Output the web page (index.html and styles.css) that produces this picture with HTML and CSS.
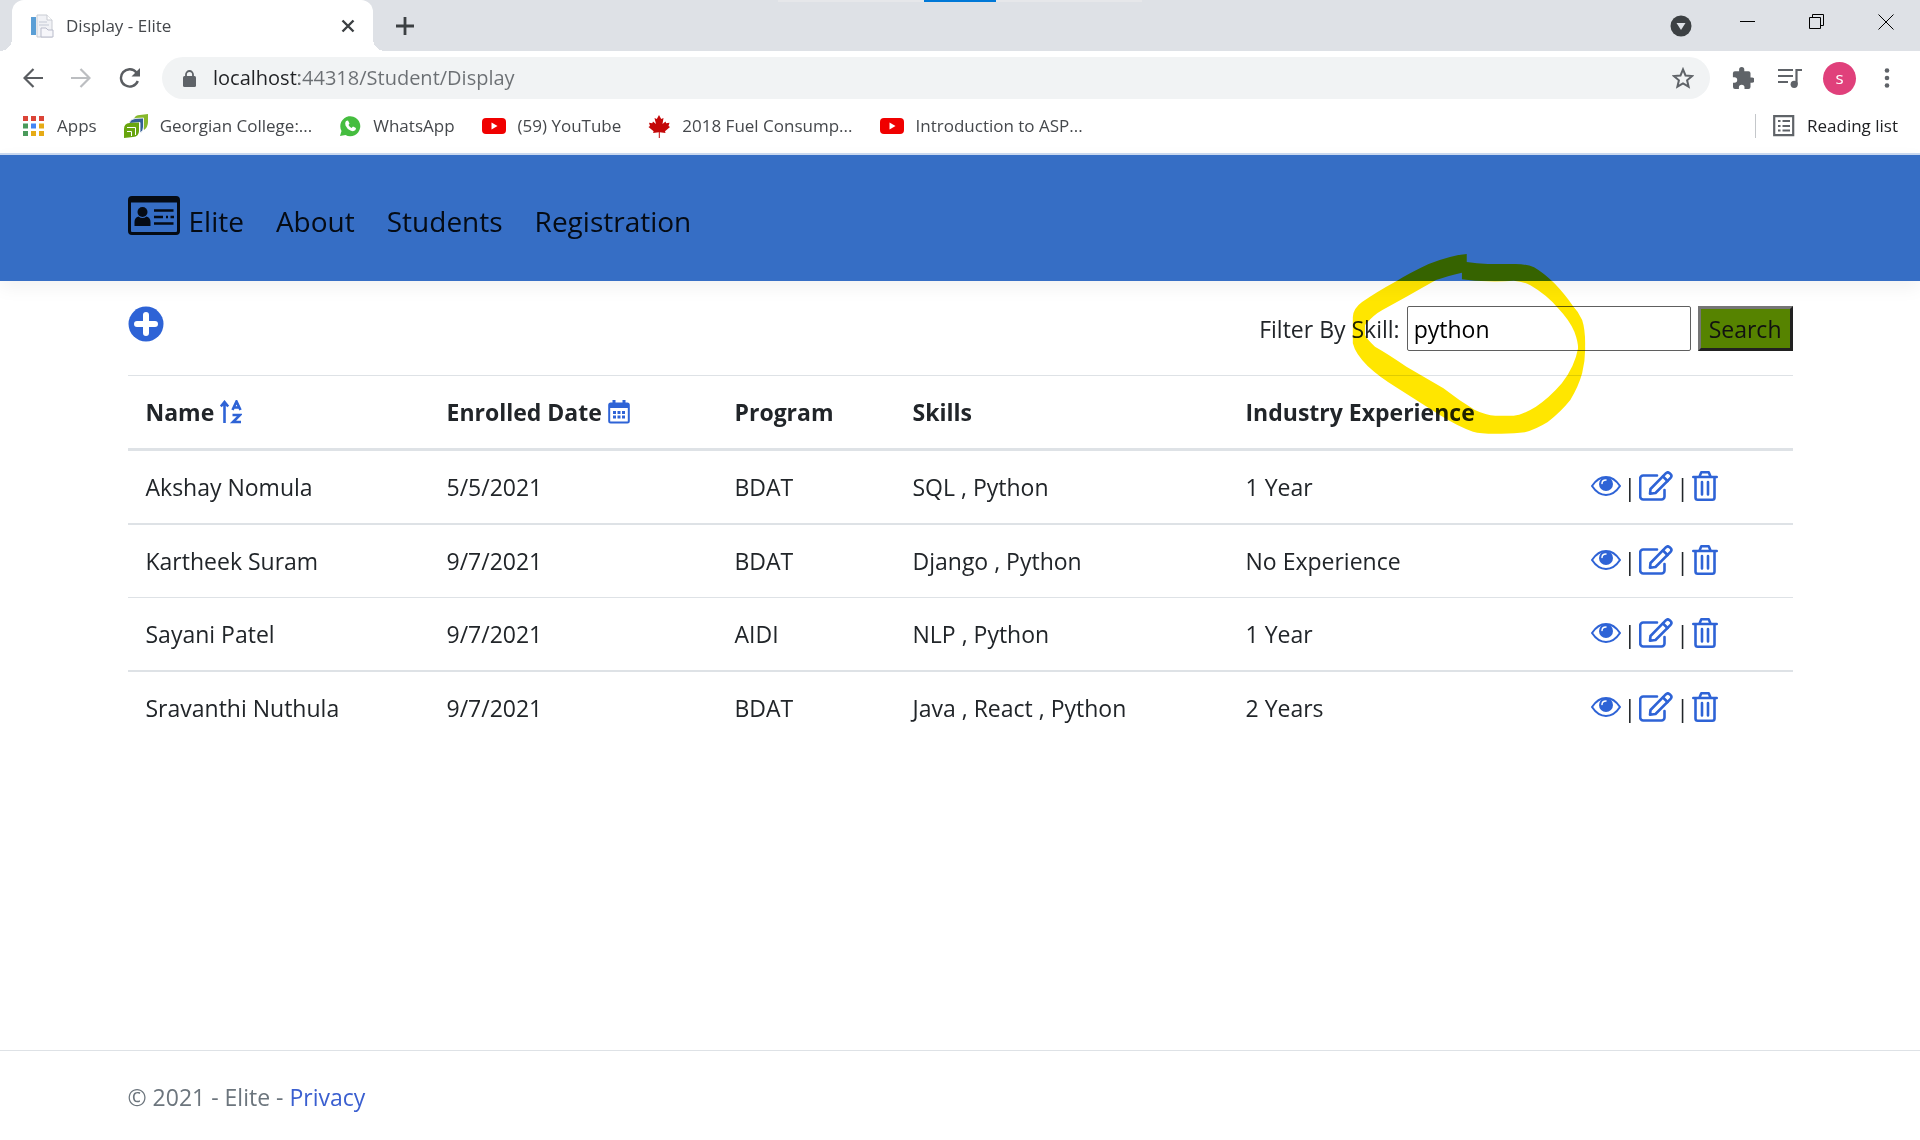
FILE: index.html
```html
<!DOCTYPE html>
<html lang="en">
<head>
<meta charset="utf-8">
<meta name="viewport" content="width=device-width, initial-scale=1">
<title>Display - Elite</title>
<link rel="stylesheet" href="styles.css">
</head>
<body>
<svg class="sprite" width="0" height="0" aria-hidden="true">
  <symbol id="eye" viewBox="0 0 30 20">
    <path d="M1 10C5 4 10 1 15 1s10 3 14 9c-4 6-9 9-14 9S5 16 1 10z" fill="#fff" stroke="#2e63d6" stroke-width="2"/>
    <circle cx="15" cy="8" r="7" fill="#2e63d6"/>
    <path d="M11 7.500C11 5 12.500 4 15 4" fill="none" stroke="#fff" stroke-width="1.500" stroke-linecap="round"/>
  </symbol>
  <symbol id="edit" viewBox="0 0 34 30">
    <g fill="none" stroke="#2e63d6" stroke-width="2.600" stroke-linejoin="round" stroke-linecap="round">
      <path d="M18 4.500H4.200a3 3 0 0 0-3 3V25.500a3 3 0 0 0 3 3H22.500a3 3 0 0 0 3-3V19"/>
      <path d="M11.500 18L27 2.200a2.600 2.600 0 0 1 3.600 0l1 1a2.600 2.600 0 0 1 0 3.600L16.500 22l-5.500.8z"/>
      <path d="M24 5.500l4.500 4.500"/>
    </g>
  </symbol>
  <symbol id="trash" viewBox="0 0 26 30">
    <g fill="none" stroke="#2e63d6" stroke-width="2.600" stroke-linejoin="round" stroke-linecap="round">
      <path d="M1.300 6H24.700M3.500 6V26.500a2.200 2.200 0 0 0 2.200 2.200H20.300a2.200 2.200 0 0 0 2.200-2.200V6M7.500 5.500L9.300 1.300H16.700L18.500 5.500M10 11V23.500M16 11V23.500"/>
    </g>
  </symbol>
  <symbol id="youtube" viewBox="0 0 24 16">
    <rect width="24" height="16" rx="4" fill="#f00000"/><path d="M9.500 4.500v7l6-3.500z" fill="#fff"/>
  </symbol>
</svg>

<header class="browser">
  <div class="snap-bar"></div>
  <div class="tab-strip">
    <div class="tab">
      <svg width="24" height="24" viewBox="0 0 24 24" aria-hidden="true"><path d="M7 1h10l5 5v17H7z" fill="#f1f2f6" stroke="#c9ccd3"/><path d="M17 1v5h5" fill="#fff" stroke="#c9ccd3"/><rect x="1" y="3" width="5" height="18" fill="#5b9fd6"/><path d="M9 8h8M9 11h10" stroke="#c3c8d4"/><path d="M11 14h5l2 2h5v7H11z" fill="#f6f6fa" stroke="#b9bccb"/></svg>
      <span class="tab-title">Display - Elite</span>
      <button class="icon-button" aria-label="Close tab"><svg width="14" height="14" viewBox="0 0 14 14"><path d="M1.500 1.500l11 11M12.500 1.500l-11 11" stroke="#3c4043" stroke-width="2.400"/></svg></button>
    </div>
    <button class="icon-button new-tab" aria-label="New tab"><svg width="18" height="18" viewBox="0 0 18 18"><path d="M9 0v18M0 9h18" stroke="#3c4043" stroke-width="2.800"/></svg></button>
    <div class="window-buttons">
      <button class="icon-button tab-search" aria-label="Search tabs"><svg width="22" height="22" viewBox="0 0 22 22"><circle cx="11" cy="11" r="10.500" fill="#3c4043"/><path d="M6.500 8h9L11 15z" fill="#dee1e6"/></svg></button>
      <button class="icon-button" aria-label="Minimize"><svg width="16" height="16" viewBox="0 0 16 16"><path d="M0 7.500h15" stroke="#000"/></svg></button>
      <button class="icon-button" aria-label="Restore"><svg width="16" height="16" viewBox="0 0 16 16"><path d="M.5 3.500h11v11H.5zM3.500 3.500v-3h11v11h-3" fill="none" stroke="#000"/></svg></button>
      <button class="icon-button" aria-label="Close"><svg width="16" height="16" viewBox="0 0 16 16"><path d="M.5.5l15 15M15.500.5l-15 15" stroke="#000"/></svg></button>
    </div>
  </div>

  <div class="toolbar">
    <div class="history">
      <button class="icon-button" aria-label="Back"><svg width="20" height="20" viewBox="0 0 20 20"><path d="M20 10H2M10.500 1L1.500 10l9 9" fill="none" stroke="#5a5d61" stroke-width="2.200"/></svg></button>
      <button class="icon-button" aria-label="Forward"><svg width="20" height="20" viewBox="0 0 20 20"><path d="M0 10h18M9.500 1l9 9-9 9" fill="none" stroke="#bcbec1" stroke-width="2.200"/></svg></button>
      <button class="icon-button" aria-label="Reload"><svg width="21" height="20" viewBox="0 0 21 20"><path d="M17.500 4.500A8.700 8.700 0 1 0 18.800 13" fill="none" stroke="#5a5d61" stroke-width="2.400"/><path d="M21 0v8.500h-8.500z" fill="#5a5d61"/></svg></button>
    </div>
    <div class="omnibox">
      <svg width="13" height="17" viewBox="0 0 13 17" aria-hidden="true"><rect y="6" width="13" height="11" rx="1.500" fill="#5f6368"/><path d="M3 7V4.500a3.500 3.500 0 0 1 7 0V7" fill="none" stroke="#5f6368" stroke-width="1.800"/></svg>
      <input class="address" type="text" aria-label="Address" value="localhost:44318/Student/Display">
      <button class="icon-button" aria-label="Bookmark this page"><svg width="22" height="22" viewBox="0 0 22 22"><path d="M11 2.400l2.500 6.100 6.600.5-5 4.300 1.500 6.400L11 16.300l-5.600 3.400 1.500-6.400-5-4.300 6.600-.5z" fill="none" stroke="#5f6368" stroke-width="2"/></svg></button>
    </div>
    <div class="extensions">
      <button class="icon-button" aria-label="Extensions"><svg width="22" height="22" viewBox="0 0 22 22"><path d="M20 10.500h-1.500V6.300a2 2 0 0 0-2-2h-4.200V2.700a2.600 2.600 0 0 0-5.200 0v1.600H2.900a2 2 0 0 0-2 2v3.900h1.500a2.800 2.800 0 0 1 0 5.600H1V20a2 2 0 0 0 2 2h3.900v-1.500a2.800 2.800 0 0 1 5.600 0V22h4a2 2 0 0 0 2-2v-4.300H20a2.600 2.600 0 0 0 0-5.200z" fill="#5f6368"/></svg></button>
      <button class="icon-button" aria-label="Media"><svg width="24" height="20" viewBox="0 0 24 20"><path d="M0 2h15M0 8h15M0 14h10M18.500 16V2H24" fill="none" stroke="#5f6368" stroke-width="2.200"/><circle cx="16.200" cy="16.300" r="3.600" fill="#5f6368"/></svg></button>
      <button class="avatar" aria-label="Profile">s</button>
      <button class="icon-button" aria-label="Menu"><svg width="6" height="20" viewBox="0 0 6 20"><g fill="#5f6368"><circle cx="3" cy="2.500" r="2.300"/><circle cx="3" cy="10" r="2.300"/><circle cx="3" cy="17.500" r="2.300"/></g></svg></button>
    </div>
  </div>

  <nav class="bookmarks" aria-label="Bookmarks">
    <a class="bookmark" href="#"><svg width="22" height="20" viewBox="0 0 22 20"><g fill="#db4437"><path d="M0 0h5v5H0zM8 0h5v5H8zM16 0h5v5h-5z"/></g><path d="M0 7.500h5v5H0zM0 15h5v5H0z" fill="#4a9a5b"/><path d="M8 7.500h5v5H8z" fill="#4285f4"/><path d="M16 7.500h5v5h-5zM8 15h5v5H8zM16 15h5v5h-5z" fill="#e6ab16"/></svg>Apps</a>
    <a class="bookmark" href="#"><svg width="24" height="24" viewBox="0 0 24 24"><path d="M10 5Q11 1 16 1L24 0v8q0 5-4 8V4.500z" fill="#86b82b"/><path d="M5 9.500q1-4.500 6-5L19.500 4v9q0 4-3.500 6V8.500z" fill="#345f95" stroke="#fff" stroke-width=".8"/><path d="M0 15q0-5.500 5.500-6L15 8.500V17q0 5.500-6 6L0 24z" fill="#68a50f"/><path d="M3 13.500h8.500V21M3 17.500h4.500V22" fill="none" stroke="#fff"/></svg>Georgian College:...</a>
    <a class="bookmark" href="#"><svg width="22" height="22" viewBox="0 0 22 22"><path d="M1 21l1.500-5A10 10 0 1 1 6.500 20z" fill="#45bd3f"/><path d="M7 6l2-.5L10.500 8.500 9.500 10q1 2 3 3l1.500-1.500 3 1.500-.5 2q-2 2-5 .5Q8 14 6.500 10.500 5.500 8 7 6z" fill="#fff"/></svg>WhatsApp</a>
    <a class="bookmark" href="#"><svg width="24" height="16"><use href="#youtube"/></svg>(59) YouTube</a>
    <a class="bookmark" href="#"><svg width="22" height="23" viewBox="0 0 22 23"><path d="M11 0l2.200 4 2.300-1-1 6 3-2.500.7 1.800 3.300-.5-1 3.200 1.500 1-5 4.200.5 1.800-5.700-.8V23h-1v-5.800l-5.700.8.5-1.800L.5 12l1.500-1L1 7.800l3.300.5L5 6.500 8 9 6.500 3l2.300 1z" fill="#c40808"/></svg>2018 Fuel Consump...</a>
    <a class="bookmark" href="#"><svg width="24" height="16"><use href="#youtube"/></svg>Introduction to ASP...</a>
    <a class="bookmark reading-list" href="#"><svg width="22" height="22" viewBox="0 0 22 22"><path d="M1.200 1.200h19v19h-19z" fill="none" stroke="#5f6368" stroke-width="2.200"/><path d="M5 6h2.500M5 11h2.500M5 15.500h2.500M9.500 6H17M9.500 11H17M9.500 15.500H17" stroke="#5f6368" stroke-width="2"/></svg>Reading list</a>
  </nav>
</header>

<nav class="site-nav">
  <div class="container nav-items">
    <a class="brand" href="#"><svg width="52" height="40" viewBox="0 0 52 40" aria-hidden="true"><rect x="1.500" y="1.500" width="49" height="36" rx="2.500" fill="none" stroke="#050b14" stroke-width="3"/><path d="M1 1h50v5.500H1z" fill="#050b14"/><circle cx="14.500" cy="16" r="5" fill="#050b14"/><path d="M6.500 30v-4q0-4.500 4-5.500q4 3 8 0q4 1 4 5.500v4z" fill="#050b14"/><path d="M26 14.500h19.500M26 21h9M38 21h2M42.500 21H46M26 27.500h19.500" stroke="#050b14" stroke-width="2.600"/></svg>Elite</a>
    <a href="#">About</a>
    <a href="#">Students</a>
    <a href="#">Registration</a>
  </div>
</nav>

<main class="container">
  <div class="actions-bar">
    <a class="add" href="#" aria-label="Add student"><svg width="36" height="36" viewBox="0 0 36 36"><circle cx="18" cy="18" r="17.500" fill="#2e63d6"/><path d="M18 9v18M9 18h18" stroke="#fff" stroke-width="6" stroke-linecap="round"/></svg></a>
    <form class="filter" onsubmit="return false">
      <label for="skill">Filter By Skill:</label>
      <input id="skill" type="text" value="python">
      <button class="search">Search</button>
      <svg class="highlighter" viewBox="0 0 1568 600" preserveAspectRatio="none" aria-hidden="true">
        <path fill="#ffe600" d="M613 42Q570 46 510 72Q460 98 420 125Q370 155 330 186Q305 206 305 232V310Q312 342 345 378Q378 412 420 440L540 525Q590 560 630 575Q650 581 690 581Q740 582 770 577Q800 568 832 546Q868 515 893 480Q915 440 925 400Q934 360 933 320Q934 270 925 240Q915 215 900 198Q880 165 850 130Q820 98 795 82Q775 72 745 72H670Q640 70 613 66ZM600 98V118Q635 124 670 124Q710 125 740 122Q765 124 785 136Q830 165 860 205Q890 240 904 275Q914 305 914 325Q905 380 870 430Q835 475 800 500Q760 527 740 527H690Q665 526 635 510Q590 480 550 445L450 380Q400 342 365 320Q345 300 338 285V255Q360 225 385 210L450 170Q490 145 530 120Q560 108 600 98Z"/>
      </svg>
    </form>
  </div>

  <table class="students">
    <colgroup><col class="c-name"><col class="c-date"><col class="c-program"><col class="c-skills"><col class="c-exp"><col></colgroup>
    <thead>
      <tr>
        <th>Name <a href="#" aria-label="Sort by name"><svg width="22" height="24" viewBox="0 0 22 24"><path d="M4.500 23V4M.8 6.500L4.500 2l3.700 4.500" fill="none" stroke="#2e63d6" stroke-width="2.600"/><path d="M12.500 10L16.500 1.500 20.500 10M13.500 7.500h6M12.500 15h7.500l-7 7H21" fill="none" stroke="#2e63d6" stroke-width="2.600"/></svg></a></th>
        <th>Enrolled Date <a href="#" aria-label="Sort by date"><svg width="22" height="24" viewBox="0 0 22 24"><rect x="1.200" y="3.500" width="19.600" height="19" rx="1.500" fill="none" stroke="#2e63d6" stroke-width="2"/><path d="M1 3h20v5H1zM4.500 0h3v4h-3zM14.500 0h3v4h-3z" fill="#2e63d6"/><path d="M5 12.500h12M5 17h12" stroke="#2e63d6" stroke-width="3" stroke-dasharray="3 1.500"/></svg></a></th>
        <th>Program</th><th>Skills</th><th>Industry Experience</th><th></th>
      </tr>
    </thead>
    <tbody>
      <tr><td>Akshay Nomula</td><td>5/5/2021</td><td>BDAT</td><td>SQL , Python</td><td>1 Year</td>
        <td><div class="row-actions"><a href="#" aria-label="View"><svg width="30" height="20"><use href="#eye"/></svg></a><span>|</span><a href="#" aria-label="Edit"><svg width="34" height="30"><use href="#edit"/></svg></a><span>|</span><a href="#" aria-label="Delete"><svg width="26" height="30"><use href="#trash"/></svg></a></div></td></tr>
      <tr><td>Kartheek Suram</td><td>9/7/2021</td><td>BDAT</td><td>Django , Python</td><td>No Experience</td>
        <td><div class="row-actions"><a href="#" aria-label="View"><svg width="30" height="20"><use href="#eye"/></svg></a><span>|</span><a href="#" aria-label="Edit"><svg width="34" height="30"><use href="#edit"/></svg></a><span>|</span><a href="#" aria-label="Delete"><svg width="26" height="30"><use href="#trash"/></svg></a></div></td></tr>
      <tr><td>Sayani Patel</td><td>9/7/2021</td><td>AIDI</td><td>NLP , Python</td><td>1 Year</td>
        <td><div class="row-actions"><a href="#" aria-label="View"><svg width="30" height="20"><use href="#eye"/></svg></a><span>|</span><a href="#" aria-label="Edit"><svg width="34" height="30"><use href="#edit"/></svg></a><span>|</span><a href="#" aria-label="Delete"><svg width="26" height="30"><use href="#trash"/></svg></a></div></td></tr>
      <tr><td>Sravanthi Nuthula</td><td>9/7/2021</td><td>BDAT</td><td>Java , React , Python</td><td>2 Years</td>
        <td><div class="row-actions"><a href="#" aria-label="View"><svg width="30" height="20"><use href="#eye"/></svg></a><span>|</span><a href="#" aria-label="Edit"><svg width="34" height="30"><use href="#edit"/></svg></a><span>|</span><a href="#" aria-label="Delete"><svg width="26" height="30"><use href="#trash"/></svg></a></div></td></tr>
    </tbody>
  </table>
</main>

<footer class="footer">
  <div class="container">© 2021 - Elite - <a href="#">Privacy</a></div>
</footer>
</body>
</html>
```

FILE: styles.css
```css
* { box-sizing: border-box; }

body {
  margin: 0;
  min-height: 100vh;
  display: flex;
  flex-direction: column;
  background: #fff;
  color: #212529;
  font: 23px/36px "Open Sans", "Noto Sans", sans-serif;
}

a { text-decoration: none; color: #3a5fd0; }
svg { display: block; flex: none; }
button, input { font: inherit; }
.sprite { position: absolute; }

.icon-button {
  display: flex;
  padding: 0;
  border: 0;
  background: none;
}

/* Browser frame */
.browser { position: relative; border-bottom: 2px solid #c9d8ef; }

.snap-bar {
  position: absolute;
  top: 0;
  left: 50%;
  width: 364px;
  height: 2px;
  transform: translateX(-50%);
  background: linear-gradient(#0078d7, #0078d7) center / 72px 2px no-repeat #e6e7ea;
}

.tab-strip {
  display: flex;
  align-items: center;
  height: 51px;
  padding-left: 12px;
  background: #dee1e6;
}

.tab {
  position: relative;
  display: flex;
  align-items: center;
  gap: 12px;
  width: 361px;
  height: 51px;
  padding: 0 18px;
  border-radius: 12px 12px 0 0;
  background: #fff;
}

.tab::before,
.tab::after {
  content: "";
  position: absolute;
  bottom: 0;
  width: 12px;
  height: 12px;
}
.tab::before { right: 100%; background: radial-gradient(circle at 0 0, transparent 12px, #fff 12px); }
.tab::after { left: 100%; background: radial-gradient(circle at 100% 0, transparent 12px, #fff 12px); }

.tab-title { flex: 1; font-size: 17px; color: #45484c; }
.new-tab { margin-left: 23px; }

.window-buttons {
  display: flex;
  align-items: center;
  gap: 53px;
  height: 44px;
  margin: 0 26px 8px auto;
}
.tab-search { margin: 8px -5px 0 0; }

.toolbar {
  display: flex;
  align-items: center;
  height: 54px;
  padding: 0 30px 0 23px;
}

.history { display: flex; gap: 28px; width: 139px; }

.omnibox {
  flex: 1;
  display: flex;
  align-items: center;
  gap: 17px;
  height: 42px;
  padding: 0 16px 0 21px;
  border-radius: 21px;
  background: #f1f3f4;
}

/* The host is darker than the rest of the address */
.address {
  flex: 1;
  min-width: 0;
  height: 36px;
  padding: 0;
  border: 0;
  outline: 0;
  font-size: 20px;
  color: #5f6368;
  background: linear-gradient(90deg, #202124 86px, #6b6f73 86px);
  -webkit-background-clip: text;
  background-clip: text;
  -webkit-text-fill-color: transparent;
}

.extensions { display: flex; align-items: center; gap: 24px; padding-left: 22px; }

.avatar {
  width: 33px;
  height: 33px;
  margin: 0 4px 0 -3px;
  padding: 0 0 2px;
  border: 0;
  border-radius: 50%;
  background: #e0407b;
  color: #fff;
  font-size: 17px;
  line-height: 31px;
}

.bookmarks {
  display: flex;
  align-items: center;
  gap: 27px;
  height: 48px;
  padding: 0 22px 6px 23px;
}

.bookmark {
  display: flex;
  align-items: center;
  gap: 12px;
  font-size: 17px;
  line-height: 24px;
  color: #45484c;
  white-space: nowrap;
}
.reading-list { margin-left: auto; padding-left: 17px; border-left: 1px solid #c4c7ca; color: #202124; }

/* Site */
.container { width: calc(100% - 60px); max-width: 1665px; margin: 0 auto; }

.site-nav {
  padding: 36px 0;
  background: #366ec5;
  box-shadow: 0 6px 18px rgba(0, 0, 0, .06);
}

.nav-items { display: flex; align-items: center; gap: 32px; height: 54px; }
.nav-items a { font-size: 28px; line-height: 44px; color: #050b14; padding-top: 6px; }
.nav-items .brand { display: flex; gap: 9px; }
.brand svg { margin-top: -3px; }

.actions-bar {
  display: flex;
  justify-content: space-between;
  align-items: flex-start;
  padding: 25px 0 24px;
}

.filter { position: relative; display: flex; align-items: center; gap: 7px; }
.filter input {
  width: 284px;
  height: 45px;
  padding: 0 6px;
  border: 1px solid #5f5f5f;
  border-radius: 2px;
  color: #000;
}
.search {
  height: 45px;
  padding: 0 8px;
  border: 3px solid;
  border-color: #767676 #212121 #212121 #767676;
  background: #568300;
  color: #111;
}
.highlighter {
  position: absolute;
  top: -66px;
  right: -27px;
  width: 580px;
  height: 200px;
  mix-blend-mode: multiply;
  pointer-events: none;
}

.students { width: 100%; table-layout: fixed; border-spacing: 0; }
.c-name { width: 301px; }
.c-date { width: 288px; }
.c-program { width: 178px; }
.c-skills { width: 333px; }
.c-exp { width: 345px; }

.students th,
.students td {
  padding: 18px;
  border-top: 1px solid #dee2e6;
  text-align: left;
  line-height: 36px;
  white-space: nowrap;
}
.students th { border-bottom: 3px solid #dee2e6; }
.students th a { display: inline-block; line-height: 0; vertical-align: -3px; }
.students tbody tr:first-child td { border-top: 0; }
.students tbody tr:nth-child(even) td { border-top-width: 2px; }

.row-actions { display: flex; align-items: center; gap: 3px; height: 36px; }
.row-actions a { padding-bottom: 3px; }

.footer {
  margin-top: auto;
  padding: 28px 0 25px;
  border-top: 1px solid #dee2e6;
  color: #6c757d;
}
```
